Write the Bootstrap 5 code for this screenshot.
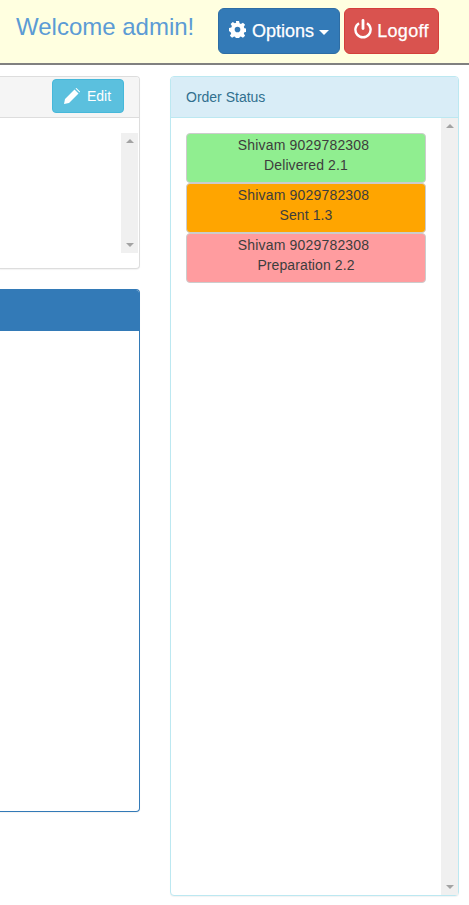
<!DOCTYPE html>
<html lang="en"><head><meta charset="utf-8">
<title>Order Status</title>
<link rel="stylesheet" href="https://cdn.jsdelivr.net/npm/bootstrap@5.3.0/dist/css/bootstrap.min.css">
<style>
html,body{height:905px;overflow:hidden}
body{font-family:"Liberation Sans",Arial,sans-serif;font-size:14px;color:#333;background:#fff;line-height:20px}
.top-bar{height:65px;background:#ffffe0;border-bottom:2px solid #808080;padding:8px 30px 0 16px}
.welcome{font-size:24px;line-height:26px;color:#5b9bd5;margin:6px 0 0;font-weight:400;width:202px;white-space:nowrap}
.bar-btn{height:46px;font-size:18px;line-height:24px;color:#fff;border-radius:6px;padding:0;display:flex;align-items:center;justify-content:center;-webkit-text-stroke:.25px #fff}
.opt-btn{width:122px;background:#337ab7;border:1px solid #2e6da4}
.off-btn{width:95px;background:#d9534f;border:1px solid #d43f3a;margin-left:4px}
.bar-btn svg{flex:none;margin-bottom:4px}
.opt-btn svg{margin-right:6px}
.off-btn svg{margin-right:5px}
.off-label{letter-spacing:.3px}
.caret-down{width:0;height:0;border-left:5px solid transparent;border-right:5px solid transparent;border-top:5px solid #fff;margin-left:5px;margin-top:2px}
.main-area{padding:11px 10px 0 0}
.left-col{width:140px;flex:none;margin-right:30px}
.edit-panel{height:193px;border:1px solid #ddd;border-left:0;border-radius:0 4px 4px 0;box-shadow:0 1px 1px rgba(0,0,0,.05)}
.edit-head{height:41px;background:#f5f5f5;border-bottom:1px solid #ddd;padding:2px 15px 0 0;border-radius:0 3px 0 0}
.edit-btn{width:72px;height:34px;background:#5bc0de;border:1px solid #46b8da;border-radius:4px;color:#fff;font-size:14px;display:flex;align-items:center;justify-content:center;padding:0 1px 0 0;gap:7px}
.edit-body{height:151px;padding:15px 1px 0 0}
.blue-panel{height:523px;margin-top:20px;border:1px solid #337ab7;border-left:0;border-radius:0 4px 4px 0;box-shadow:0 1px 1px rgba(0,0,0,.05)}
.blue-head{height:41px;background:#337ab7;border-radius:0 3px 0 0}
.status-panel{width:289px;height:820px;border:1px solid #bce8f1;border-radius:4px;box-shadow:0 1px 1px rgba(0,0,0,.05)}
.status-head{height:41px;background:#d9edf7;border-bottom:1px solid #bce8f1;color:#31708f;padding:10px 15px;border-radius:3px 3px 0 0}
.status-body{height:777px}
.status-list{width:270px;flex:none;padding:15px 0 0 15px}
.order-item{width:240px;height:50px;border:1px solid #ccc;border-radius:4px;text-align:center;padding:1px 0 0;color:#3d3d3d}
.order-name{display:block;letter-spacing:.18px;padding-right:5px}
.order-state{display:block;letter-spacing:.1px}
.st-green{background:#90ee90}
.st-orange{background:#ffa500}
.st-pink{background:#ff9c9f}
.track{width:17px;flex:none;background:#f0f0f0;padding:6px 0}
.tri-up,.tri-down{width:0;height:0;border-left:4px solid transparent;border-right:4px solid transparent}
.tri-up{border-bottom:4px solid #a3a3a3}
.tri-down{border-top:4px solid #a3a3a3}
.edit-track{height:120px}
.status-track{height:100%}
</style></head>
<body>
<header class="top-bar d-flex align-items-start">
  <h1 class="welcome">Welcome admin!</h1>
  <button type="button" class="bar-btn opt-btn">
    <svg width="17" height="17" viewBox="0 0 24 24" aria-hidden="true"><path fill="#fff" fill-rule="evenodd" d="M9.800 0h4.400l.7 3.300 1.900.8 2.900-1.800 3 3-1.800 2.900.8 1.900 3.300.7v4.400l-3.300.7-.8 1.900 1.800 2.900-3 3-2.900-1.800-1.900.8-.7 3.300H9.800l-.7-3.300-1.900-.8-2.900 1.800-3-3 1.800-2.900-.8-1.900L0 14.200V9.800l3.300-.7.8-1.900-1.800-2.900 3-3 2.900 1.800 1.900-.8zM12 8a4 4 0 1 0 0 8 4 4 0 0 0 0-8z"/></svg>
    <span>Options</span><span class="caret-down"></span>
  </button>
  <button type="button" class="bar-btn off-btn">
    <svg width="18" height="20" viewBox="0 0 18 20" aria-hidden="true"><path fill="none" stroke="#fff" stroke-width="2.400" d="M5 4.200a7.600 7.600 0 1 0 8 0"/><path fill="none" stroke="#fff" stroke-width="2.800" stroke-linecap="round" d="M9 1.500v8"/></svg>
    <span class="off-label">Logoff</span>
  </button>
</header>
<main class="main-area d-flex align-items-start">
  <div class="left-col">
    <section class="edit-panel bg-white">
      <div class="edit-head d-flex justify-content-end">
        <button type="button" class="edit-btn">
          <svg width="16" height="16" viewBox="0 0 16 16" aria-hidden="true"><path fill="#fff" d="M0 16l1-5L10.500 1.500l4 4L5 15zM11.500.5l1-.5 3.500 3.500-.5 1z"/></svg>
          <span>Edit</span>
        </button>
      </div>
      <div class="edit-body d-flex justify-content-end">
        <div class="track edit-track d-flex flex-column justify-content-between align-items-center"><span class="tri-up"></span><span class="tri-down"></span></div>
      </div>
    </section>
    <section class="blue-panel bg-white"><div class="blue-head"></div></section>
  </div>
  <section class="status-panel bg-white">
    <div class="status-head">Order Status</div>
    <div class="status-body d-flex justify-content-between">
      <div class="status-list">
        <div class="order-item st-green"><span class="order-name">Shivam 9029782308</span><span class="order-state">Delivered 2.1</span></div>
        <div class="order-item st-orange"><span class="order-name">Shivam 9029782308</span><span class="order-state">Sent 1.3</span></div>
        <div class="order-item st-pink"><span class="order-name">Shivam 9029782308</span><span class="order-state">Preparation 2.2</span></div>
      </div>
      <div class="track status-track d-flex flex-column justify-content-between align-items-center"><span class="tri-up"></span><span class="tri-down"></span></div>
    </div>
  </section>
</main>
<script src="https://cdn.jsdelivr.net/npm/bootstrap@5.3.0/dist/js/bootstrap.bundle.min.js"></script>
</body></html>
